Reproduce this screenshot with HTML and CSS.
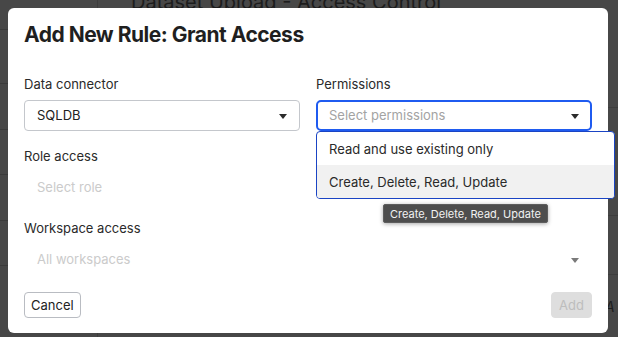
FILE: index.html
```html
<!DOCTYPE html>
<html lang="en">
<head>
    <meta charset="UTF-8">
    <title>Dataset Upload - Access Control</title>
    <link rel="stylesheet" href="styles.css">
</head>
<body>
<div class="page">
    <aside class="sidebar">
        <div class="sidebar__row sidebar__row--first"></div>
        <div class="sidebar__row"></div>
        <div class="sidebar__row"></div>
        <div class="sidebar__row"></div>
        <div class="sidebar__row"></div>
        <div class="sidebar__row"></div>
    </aside>
    <main class="content">
        <h1 class="content__title">Dataset Upload - Access Control</h1>
        <div class="table">
            <div class="table__row"></div>
            <div class="table__row table__row--mid"></div>
            <div class="table__row table__row--last"><span class="table__mark">. A</span></div>
        </div>
    </main>
</div>

<div class="modal">
    <h2 class="modal__title">Add New Rule: Grant Access</h2>

    <div class="modal__grid">
        <div class="field">
            <label class="field__label">Data connector</label>
            <div class="select">
                <span class="select__value">SQLDB</span>
                <span class="select__arrow"></span>
            </div>
        </div>
        <div class="field">
            <label class="field__label">Permissions</label>
            <div class="select select--focus">
                <span class="select__placeholder">Select permissions</span>
                <span class="select__arrow"></span>
                <ul class="menu">
                    <li class="menu__item">Read and use existing only</li>
                    <li class="menu__item menu__item--hover">Create, Delete, Read, Update</li>
                    <span class="tooltip">Create, Delete, Read, Update</span>
                </ul>
            </div>
        </div>
    </div>

    <div class="field field--wide">
        <label class="field__label">Role access</label>
        <div class="select select--disabled">
            <span class="select__placeholder">Select role</span>
            <span class="select__arrow"></span>
        </div>
    </div>

    <div class="field field--wide">
        <label class="field__label">Workspace access</label>
        <div class="select select--disabled">
            <span class="select__placeholder">All workspaces</span>
            <span class="select__arrow"></span>
        </div>
    </div>

    <div class="modal__footer">
        <button class="btn">Cancel</button>
        <button class="btn btn--primary" disabled>Add</button>
    </div>
</div>
</body>
</html>
```

FILE: styles.css
```css
* {
  box-sizing: border-box;
}

html,
body {
  width: 618px;
  height: 337px;
  overflow: hidden;
}

body {
  font-family: Inter, "Noto Sans", sans-serif;
  margin: 0;
  padding: 0;
  background-color: #474747;
}

/* page behind the overlay */
.page {
  display: flex;
  height: 337px;
  overflow: hidden;
}

.sidebar {
  width: 98px;
  border-right: 1px solid #3d3d3d;
  padding-top: 29px;
}

.sidebar__row {
  height: 45.5px;
  border-top: 1px solid #3b3b3b;
}

.sidebar__row--first {
  height: 54px;
}

.content {
  flex: 1;
  padding-left: 33px;
}

.content__title {
  margin: -11px 0 0 0;
  font-weight: 400;
  font-size: 20px;
  line-height: 26px;
  color: #1c1c1c;
  white-space: nowrap;
}

.table {
  margin-top: 92px;
}

.table__row {
  height: 108px;
  border-top: 1px solid #3d3d3d;
  position: relative;
}

.table__row--mid {
  height: 59px;
}

.table__row--last {
  height: 63px;
}

.table__mark {
  position: absolute;
  left: 474px;
  top: 6px;
  font-style: italic;
  font-size: 14px;
  line-height: 17px;
  color: #1c1c1c;
}

/* modal */
.modal {
  position: absolute;
  top: 8px;
  left: 8px;
  width: 600px;
  height: 325px;
  padding: 13px 16px 15px;
  background-color: #FFFFFF;
  border-radius: 6px;
  display: flex;
  flex-direction: column;
}

.modal__title {
  margin: 0 0 25px 0;
  font-weight: 700;
  font-size: 21px;
  line-height: 28px;
  color: #1f1f1f;
  letter-spacing: -0.5px;
}

.modal__grid {
  display: grid;
  grid-template-columns: 1fr 1fr;
  gap: 16px;
}

.field {
  display: flex;
  flex-direction: column;
}

.field--wide {
  margin-top: 15px;
}

.field__label {
  font-size: 13px;
  line-height: 20px;
  color: #2a2a2a;
  margin-bottom: 6px;
}

.select {
  position: relative;
  height: 31px;
  border: 1px solid #c4c7cc;
  border-radius: 4px;
  padding: 0 12px 2px;
  display: flex;
  align-items: center;
  font-size: 13px;
  color: #222;
}

.select--focus {
  border: 2px solid #1f5bf0;
  border-radius: 5px;
  padding: 0 11px 2px;
}

.select--disabled {
  border-color: transparent;
}

.select__placeholder {
  color: #a3a3a3;
}

.select--disabled .select__placeholder {
  color: #cbcbcb;
}

.select__arrow {
  position: absolute;
  right: 12px;
  top: 13px;
  border-left: 4px solid transparent;
  border-right: 4px solid transparent;
  border-top: 5px solid #2b2b2b;
}

.select--focus .select__arrow {
  right: 11px;
  top: 12px;
}

.select--disabled .select__arrow {
  border-top-color: #7a7a7a;
}

.menu {
  position: absolute;
  top: calc(100% + 2px);
  left: -2px;
  width: 299px;
  margin: 0;
  padding: 0;
  list-style: none;
  background-color: #FFFFFF;
  border: 1px solid #1a44c4;
  border-radius: 4px;
  z-index: 2;
}

.menu__item {
  height: 33px;
  padding: 1px 12px 0;
  display: flex;
  align-items: center;
  font-size: 13px;
  color: #2a2a2a;
}

.menu__item--hover {
  background-color: #f1f1f1;
  border-radius: 0 0 3px 3px;
}

.tooltip {
  position: absolute;
  top: calc(100% + 6px);
  left: 66px;
  height: 19px;
  padding: 0 6px;
  display: flex;
  align-items: center;
  white-space: nowrap;
  background-color: #4e4e4e;
  border: 1px solid #5e5e5e;
  border-radius: 2px;
  box-shadow: 0 1px 4px rgba(0, 0, 0, 0.35);
  font-size: 11px;
  color: #f2f2f2;
}

.modal__footer {
  margin-top: auto;
  display: flex;
  justify-content: space-between;
  align-items: center;
}

.btn {
  height: 26px;
  padding: 0 6px;
  font-family: Inter, "Noto Sans", sans-serif;
  font-size: 13px;
  color: #222;
  background-color: #FFFFFF;
  border: 1px solid #b9bcc2;
  border-radius: 4px;
}

.btn--primary {
  width: 41px;
  padding: 0;
  background-color: #dedede;
  border-color: #dedede;
  color: #bdbdbd;
}
```
